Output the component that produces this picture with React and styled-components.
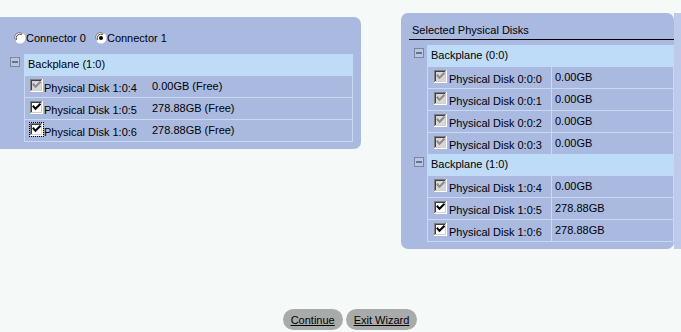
import React from "react";
import styled, { createGlobalStyle } from "styled-components";

const Global = createGlobalStyle`
  html, body { margin: 0; padding: 0; background: #f5f9f7; }
  * { box-sizing: border-box; }
`;

const Page = styled.div`
  min-height: 332px;
  display: flex;
  flex-direction: column;
  background: #f5f9f7;
  font-family: "Liberation Sans", Arial, sans-serif;
  font-size: 11px;
  color: #000;
  overflow: hidden;
`;

const TopArea = styled.div`
  display: flex;
  align-items: flex-start;
`;

const Panel = styled.div`
  background: #a9b9df;
  display: flex;
  flex-direction: column;
`;

const LeftPanel = styled(Panel)`
  margin-top: 17px;
  width: 361px;
  padding: 13px 8px 7px 10px;
  border-radius: 0 7px 7px 0;
`;

const RightPanel = styled(Panel)`
  margin-top: 13px;
  margin-left: 40px;
  width: 273px;
  padding: 9px 0 7px 8px;
  border-radius: 7px;
`;

const RightEdge = styled.div`
  margin-top: 13px;
  width: 7px;
  height: 236px;
  background: #bdcaea;
`;

const RadioRow = styled.div`
  display: flex;
  align-items: center;
  height: 16px;
  padding-left: 4px;
  margin-bottom: 8px;
`;

const RadioLabel = styled.label`
  display: flex;
  align-items: center;
  margin-right: 9px;
  line-height: 16px;
`;

const Title = styled.div`
  line-height: 16px;
  padding: 0 0 1px 3px;
  border-bottom: 1px solid #000;
  margin-right: -1px;
  margin-bottom: 5px;
`;

const Group = styled.div`
  display: flex;
  align-items: flex-start;
  padding-left: ${(p) => p.$indent || 0}px;
`;

const ToggleBox = styled.span`
  display: block;
  width: 10px;
  height: 10px;
  margin: 3px ${(p) => p.$gap}px 0 0;
  flex: none;
`;

const Tree = styled.div`
  display: flex;
  flex-direction: column;
  width: ${(p) => p.$width}px;
`;

const Header = styled.div`
  height: 21px;
  line-height: 21px;
  background: #bedcf7;
  padding-left: 4px;
`;

const Row = styled.div`
  display: flex;
  border: 1px solid #c7d9f4;
  border-bottom: ${(p) => (p.$last ? "1px solid #c7d9f4" : "none")};
  height: ${(p) => (p.$last ? 23 : 22)}px;
`;

const NameCell = styled.div`
  display: flex;
  align-items: flex-start;
  width: ${(p) => p.$width}px;
  padding-left: ${(p) => p.$pad}px;
  padding-top: 2px;
  border-right: ${(p) => (p.$divider ? "1px solid #c7d9f4" : "none")};
  flex: none;
`;

const NameText = styled.span`
  margin-left: ${(p) => p.$gap}px;
  padding-top: 3px;
  line-height: 14px;
  white-space: nowrap;
`;

const SizeCell = styled.div`
  padding-left: ${(p) => p.$pad}px;
  padding-top: 3px;
  line-height: 14px;
  white-space: nowrap;
`;

const CheckWrap = styled.span`
  display: block;
  width: 13px;
  height: 13px;
  margin-top: 1px;
  outline: ${(p) => (p.$focus ? "1px dotted #000" : "none")};
  outline-offset: 0;
  flex: none;
`;

const Footer = styled.div`
  margin-top: auto;
  display: flex;
  justify-content: center;
  gap: 3px;
  padding: 0 0 2px 19px;
`;

const Button = styled.button`
  height: 21px;
  border: none;
  border-radius: 11px;
  background: #a9aba9;
  padding: 0 8px;
  font-family: "Liberation Sans", Arial, sans-serif;
  font-size: 11px;
  color: #000;
  text-decoration: underline;
  cursor: pointer;
`;

const LastRowLine = styled.div`
  margin-left: ${(p) => p.$left}px;
  width: ${(p) => p.$width}px;
  height: 1px;
  background: #c7d9f4;
`;

function Checkbox({ disabled, focus }) {
  const bg = disabled ? "#d8d8d8" : "#ffffff";
  const mark = disabled ? "#8c8c8c" : "#000000";
  return (
    <CheckWrap $focus={focus}>
      <svg width="13" height="13" viewBox="0 0 13 13">
        <rect x="0" y="0" width="13" height="13" fill="#ffffff" />
        <rect x="0" y="0" width="12" height="12" fill="#d4d0c8" />
        <rect x="0" y="0" width="12" height="1" fill="#808080" />
        <rect x="0" y="0" width="1" height="12" fill="#808080" />
        <rect x="1" y="1" width="10" height="1" fill="#404040" />
        <rect x="1" y="1" width="1" height="10" fill="#404040" />
        <rect x="2" y="2" width="9" height="9" fill={bg} />
        <path
          d="M3.5 5.5 L5.5 7.8 L9.8 3.4"
          fill="none"
          stroke={mark}
          strokeWidth="2"
          strokeLinecap="square"
        />
      </svg>
    </CheckWrap>
  );
}

function Radio({ checked }) {
  return (
    <svg width="12" height="12" viewBox="0 0 12 12" style={{ flex: "none" }}>
      <circle cx="6" cy="6" r="5.5" fill="#ffffff" />
      <path d="M1.5 8.5 A5 5 0 0 1 8.5 1.5" fill="none" stroke="#808080" strokeWidth="1" />
      <path d="M2.5 7.8 A4 4 0 0 1 7.8 2.5" fill="none" stroke="#404040" strokeWidth="1" />
      {checked && <circle cx="6" cy="6" r="2" fill="#000" />}
    </svg>
  );
}

function Toggle({ gap }) {
  return (
    <ToggleBox $gap={gap}>
      <svg width="10" height="10" viewBox="0 0 10 10">
        <rect x="0.5" y="0.5" width="9" height="9" fill="#b7c5e6" stroke="#7d8599" />
        <rect x="2" y="4.5" width="6" height="1" fill="#202020" />
      </svg>
    </ToggleBox>
  );
}

function DiskGroup({ title, disks, cfg }) {
  return (
    <Group $indent={cfg.indent}>
      <Toggle gap={cfg.toggleGap} />
      <Tree $width={cfg.width}>
        <Header>{title}</Header>
        {disks.map((d, i) => (
          <Row key={d.name} $last={cfg.lastBorder && i === disks.length - 1}>
            <NameCell $width={cfg.nameWidth} $pad={cfg.checkPad} $divider={cfg.divider}>
              <Checkbox disabled={d.disabled} focus={d.focus} />
              <NameText $gap={cfg.textGap}>{d.name}</NameText>
            </NameCell>
            <SizeCell $pad={cfg.sizePad}>{d.size}</SizeCell>
          </Row>
        ))}
      </Tree>
    </Group>
  );
}

const leftCfg = {
  indent: 0,
  toggleGap: 4,
  width: 329,
  nameWidth: 123,
  checkPad: 5,
  textGap: 1,
  sizePad: 4,
  divider: false,
  lastBorder: true,
};

const rightCfg = {
  indent: 5,
  toggleGap: 3,
  width: 247,
  nameWidth: 124,
  checkPad: 6,
  textGap: 2,
  sizePad: 3,
  divider: true,
  lastBorder: false,
};

const leftDisks = [
  { name: "Physical Disk 1:0:4", size: "0.00GB (Free)", disabled: true },
  { name: "Physical Disk 1:0:5", size: "278.88GB (Free)" },
  { name: "Physical Disk 1:0:6", size: "278.88GB (Free)", focus: true },
];

const selected00 = [
  { name: "Physical Disk 0:0:0", size: "0.00GB", disabled: true },
  { name: "Physical Disk 0:0:1", size: "0.00GB", disabled: true },
  { name: "Physical Disk 0:0:2", size: "0.00GB", disabled: true },
  { name: "Physical Disk 0:0:3", size: "0.00GB", disabled: true },
];

const selected10 = [
  { name: "Physical Disk 1:0:4", size: "0.00GB", disabled: true },
  { name: "Physical Disk 1:0:5", size: "278.88GB" },
  { name: "Physical Disk 1:0:6", size: "278.88GB" },
];

export default function App() {
  return (
    <Page>
      <Global />
      <TopArea>
        <LeftPanel>
          <RadioRow>
            <RadioLabel>
              <Radio />
              Connector 0
            </RadioLabel>
            <RadioLabel>
              <Radio checked />
              Connector 1
            </RadioLabel>
          </RadioRow>
          <DiskGroup title="Backplane (1:0)" disks={leftDisks} cfg={leftCfg} />
        </LeftPanel>
        <RightPanel>
          <Title>Selected Physical Disks</Title>
          <DiskGroup title="Backplane (0:0)" disks={selected00} cfg={rightCfg} />
          <DiskGroup title="Backplane (1:0)" disks={selected10} cfg={rightCfg} />
          <LastRowLine $left={18} $width={247} />
        </RightPanel>
        <RightEdge />
      </TopArea>
      <Footer>
        <Button>Continue</Button>
        <Button>Exit Wizard</Button>
      </Footer>
    </Page>
  );
}
